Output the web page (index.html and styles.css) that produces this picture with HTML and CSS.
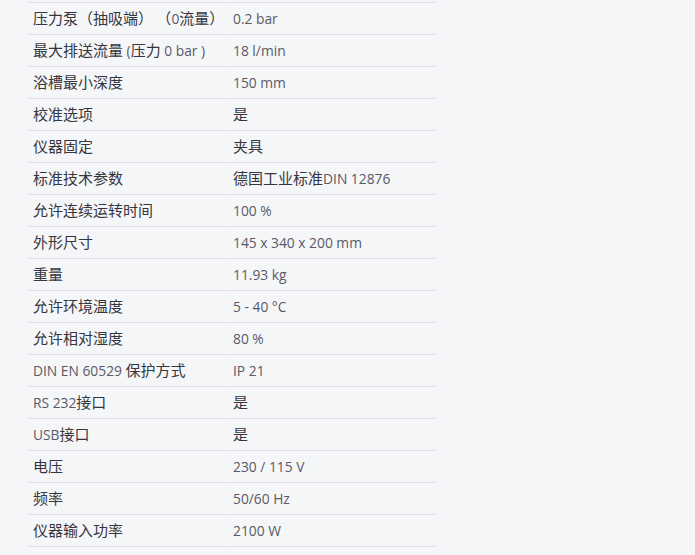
FILE: index.html
```html
<!DOCTYPE html>
<html lang="zh-CN">
<head>
<meta charset="utf-8">
<link rel="stylesheet" href="styles.css">
</head>
<body>
<div class="spec">
  <div class="row"><div class="cell">压力泵（抽吸端） （<span class="lat">0</span>流量）</div><div class="cell"><span class="lat">0.2 bar</span></div></div>
  <div class="row"><div class="cell">最大排送流量<span class="lat"> (</span>压力<span class="lat"> 0 bar )</span></div><div class="cell"><span class="lat">18 l/min</span></div></div>
  <div class="row"><div class="cell">浴槽最小深度</div><div class="cell"><span class="lat">150 mm</span></div></div>
  <div class="row"><div class="cell">校准选项</div><div class="cell">是</div></div>
  <div class="row"><div class="cell">仪器固定</div><div class="cell">夹具</div></div>
  <div class="row"><div class="cell">标准技术参数</div><div class="cell">德国工业标准<span class="lat">DIN 12876</span></div></div>
  <div class="row"><div class="cell">允许连续运转时间</div><div class="cell"><span class="lat">100 %</span></div></div>
  <div class="row"><div class="cell">外形尺寸</div><div class="cell"><span class="lat">145 x 340 x 200 mm</span></div></div>
  <div class="row"><div class="cell">重量</div><div class="cell"><span class="lat">11.93 kg</span></div></div>
  <div class="row"><div class="cell">允许环境温度</div><div class="cell"><span class="lat">5 - 40 °C</span></div></div>
  <div class="row"><div class="cell">允许相对湿度</div><div class="cell"><span class="lat">80 %</span></div></div>
  <div class="row"><div class="cell"><span class="lat">DIN EN 60529 </span>保护方式</div><div class="cell"><span class="lat">IP 21</span></div></div>
  <div class="row"><div class="cell"><span class="lat">RS 232</span>接口</div><div class="cell">是</div></div>
  <div class="row"><div class="cell"><span class="lat">USB</span>接口</div><div class="cell">是</div></div>
  <div class="row"><div class="cell">电压</div><div class="cell"><span class="lat">230 / 115 V</span></div></div>
  <div class="row"><div class="cell">频率</div><div class="cell"><span class="lat">50/60 Hz</span></div></div>
  <div class="row"><div class="cell">仪器输入功率</div><div class="cell"><span class="lat">2100 W</span></div></div>
</div>
</body>
</html>
```
FILE: styles.css
```css
html, body {
  margin: 0;
  padding: 0;
  background: #f5f6f8;
}
body {
  font-family: "Noto Sans CJK SC", "Open Sans", sans-serif;
  font-size: 15px;
  color: #363640;
}
.spec {
  margin: 2px 0 0 29px;
  width: 406px;
}
.row {
  display: grid;
  grid-template-columns: 198px 207px;
  column-gap: 1px;
}
.cell {
  height: 30px;
  line-height: 30px;
  padding-bottom: 1px;
  border-bottom: 1px solid #dcdde6;
  padding-left: 4px;
  white-space: nowrap;
  overflow: hidden;
}
.cell + .cell {
  padding-left: 5px;
}
.row:first-child .cell {
  border-top: 1px solid #dcdde6;
}
.lat {
  font-family: "Open Sans", sans-serif;
  font-size: 13.8px;
  color: #5a5a66;
}
```
